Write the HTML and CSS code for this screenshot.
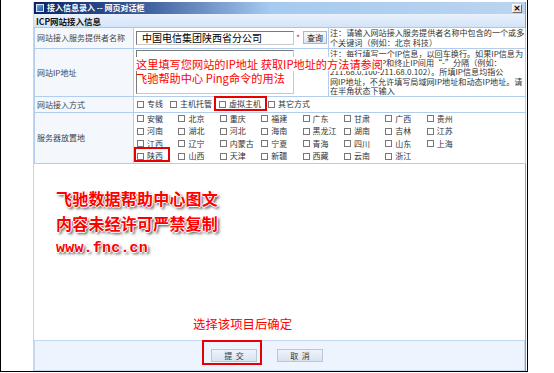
FILE: index.html
```html
<!DOCTYPE html>
<html lang="zh">
<head>
    <meta charset="UTF-8">
    <title>接入信息录入 -- 网页对话框</title>
    <link rel="stylesheet" href="styles.css">
</head>
<body>
    <div class="frame">
        <div class="dialog">
            <div class="titlebar">
                <span class="ticon"></span>
                <span class="ttext">接入信息录入 -- 网页对话框</span>
                <span class="close">×</span>
            </div>
            <div class="section-head">ICP网站接入信息</div>

            <table class="form">
                <tr class="r1">
                    <th>网站接入服务提供者名称</th>
                    <td class="field">
                        <div class="line">
                            <span class="input">中国电信集团陕西省分公司</span>
                            <span class="star">*</span>
                            <span class="btn-query">查询</span>
                        </div>
                    </td>
                    <td class="note">注：请输入网站接入服务提供者名称中包含的一个或多<br>个关键词（例如：北京 科技）</td>
                </tr>
                <tr class="r2">
                    <th>网站IP地址</th>
                    <td class="field"><div class="area"></div></td>
                    <td class="note">注：每行填写一个IP信息，以回车换行。如果IP信息为<br>段，请在起始IP和终止IP间用“-”分隔（例如：<br>211.68.0.100-211.68.0.102）。所填IP信息均指公<br>网IP地址，不允许填写局域网IP地址和动态IP地址。请<br>在半角状态下输入</td>
                </tr>
                <tr class="r3">
                    <th>网站接入方式</th>
                    <td colspan="2">
                        <div class="ways">
                            <span class="opt"><i class="box"></i>专线</span>
                            <span class="opt"><i class="box"></i>主机托管</span>
                            <span class="opt"><i class="box"></i>虚拟主机</span>
                            <span class="opt"><i class="box"></i>其它方式</span>
                        </div>
                    </td>
                </tr>
                <tr class="r4">
                    <th>服务器放置地</th>
                    <td colspan="2">
                        <div class="grid">
                            <span class="opt"><i class="box"></i>安徽</span>
                            <span class="opt"><i class="box"></i>北京</span>
                            <span class="opt"><i class="box"></i>重庆</span>
                            <span class="opt"><i class="box"></i>福建</span>
                            <span class="opt"><i class="box"></i>广东</span>
                            <span class="opt"><i class="box"></i>甘肃</span>
                            <span class="opt"><i class="box"></i>广西</span>
                            <span class="opt"><i class="box"></i>贵州</span>
                            <span class="opt"><i class="box"></i>河南</span>
                            <span class="opt"><i class="box"></i>湖北</span>
                            <span class="opt"><i class="box"></i>河北</span>
                            <span class="opt"><i class="box"></i>海南</span>
                            <span class="opt"><i class="box"></i>黑龙江</span>
                            <span class="opt"><i class="box"></i>湖南</span>
                            <span class="opt"><i class="box"></i>吉林</span>
                            <span class="opt"><i class="box"></i>江苏</span>
                            <span class="opt"><i class="box"></i>江西</span>
                            <span class="opt"><i class="box"></i>辽宁</span>
                            <span class="opt"><i class="box"></i>内蒙古</span>
                            <span class="opt"><i class="box"></i>宁夏</span>
                            <span class="opt"><i class="box"></i>青海</span>
                            <span class="opt"><i class="box"></i>四川</span>
                            <span class="opt"><i class="box"></i>山东</span>
                            <span class="opt"><i class="box"></i>上海</span>
                            <span class="opt"><i class="box"></i>陕西</span>
                            <span class="opt"><i class="box"></i>山西</span>
                            <span class="opt"><i class="box"></i>天津</span>
                            <span class="opt"><i class="box"></i>新疆</span>
                            <span class="opt"><i class="box"></i>西藏</span>
                            <span class="opt"><i class="box"></i>云南</span>
                            <span class="opt"><i class="box"></i>浙江</span>
                        </div>
                    </td>
                </tr>
            </table>

            <div class="body-space"></div>

            <div class="footer">
                <span class="btn">提&nbsp;&nbsp;交</span>
                <span class="btn">取&nbsp;&nbsp;消</span>
            </div>
        </div>

        <!-- 标注 -->
        <div class="ip-tip">
            <span class="tip-line tip-bg">这里填写您网站的IP地址 获取IP地址的方法请参阅</span>
            <span class="tip-line">飞驰帮助中心 Ping命令的用法</span>
        </div>
        <div class="mark mark-host"></div>
        <div class="mark mark-sx"></div>
        <div class="mark mark-submit"></div>
        <div class="watermark">
            <div>飞驰数据帮助中心图文</div>
            <div>内容未经许可严禁复制</div>
            <div class="wm-url">www.fnc.cn</div>
        </div>
        <div class="hint">选择该项目后确定</div>
    </div>
</body>
</html>
```

FILE: styles.css
```css
* {
    margin: 0;
    padding: 0;
    box-sizing: border-box;
}

html, body {
    width: 100%;
    height: 100%;
    overflow: hidden;
    background: #fff;
}

body {
    font-family: "Noto Sans CJK SC", "Liberation Sans", sans-serif;
    color: #333;
}

.frame {
    position: relative;
    width: 528px;
    height: 372px;
    padding: 2px 0 0 32px;
    border-left: 1px solid #000;
    border-right: 1px solid #000;
    border-bottom: 1px solid #000;
}

.dialog {
    width: 493px;
    height: 369px;
    display: flex;
    flex-direction: column;
    border-left: 1px solid #d6d3cc;
    border-right: 1px solid #9a9a9a;
}

/* 标题栏 */
.titlebar {
    height: 12px;
    display: flex;
    align-items: center;
    padding: 0 2px;
    background: linear-gradient(to right, #0a246a 0%, #3a5d9c 22%, #a6caf0 48%, #bcd4ef 100%);
}

.ticon {
    width: 8px;
    height: 8px;
    margin-right: 3px;
    background: linear-gradient(135deg, #6fa8e8, #1f4f9a);
    border: 1px solid #dfe9f6;
}

.ttext {
    flex: 1;
    color: #fff;
    font-size: 8px;
    font-weight: bold;
    line-height: 12px;
}

.close {
    width: 10px;
    height: 9px;
    margin-right: 1px;
    background: #e9e7e2;
    border: 1px solid #6b6b6b;
    border-top-color: #fff;
    border-left-color: #fff;
    font-size: 9px;
    line-height: 7px;
    text-align: center;
    color: #000;
    font-family: "DejaVu Sans", sans-serif;
    font-weight: bold;
}

.section-head {
    height: 14px;
    padding-left: 2px;
    font-size: 8.5px;
    font-weight: bold;
    line-height: 14px;
    color: #111;
    background: linear-gradient(to bottom, #e8f1fc, #d4e4f8);
    border-bottom: 1px solid #a9c6ec;
}

/* 表单 */
.form {
    width: 492px;
    border-collapse: collapse;
    table-layout: fixed;
    font-size: 8px;
}

.form th, .form td {
    border: 1px solid #b3cdee;
    border-top: none;
    vertical-align: middle;
    text-align: left;
    font-weight: normal;
}

.form th {
    width: 99px;
    padding-left: 2px;
    background: #f4f8fd;
    color: #444;
    font-size: 8px;
    white-space: nowrap;
}

.form td.field {
    width: 195px;
    padding-left: 2px;
}

.form td.note {
    padding: 0 1px;
    font-size: 8.1px;
    line-height: 9.4px;
    white-space: nowrap;
    color: #333;
    overflow: hidden;
}

.r1 { height: 20px; }
.r2 { height: 48px; }
.r3 { height: 16px; }
.r4 { height: 49px; }

.line {
    display: flex;
    align-items: center;
    white-space: nowrap;
}

.input {
    flex-shrink: 0;
    width: 158px;
    height: 14px;
    padding-left: 5px;
    font-size: 10px;
    line-height: 12px;
    color: #000;
    border: 1px solid #c9c9c9;
    border-top-color: #7a7a7a;
    border-left-color: #7a7a7a;
}

.star {
    flex-shrink: 0;
    width: 8px;
    color: #e00;
    font-size: 8px;
    text-align: center;
}

.btn-query {
    flex-shrink: 0;
    width: 24px;
    margin-left: 1px;
    height: 13px;
    font-size: 8px;
    line-height: 11px;
    text-align: center;
    color: #222;
    background: linear-gradient(to bottom, #f6f9fd, #dbe6f3);
    border: 1px solid #a8b8cc;
}

.area {
    width: 158px;
    height: 44px;
    border: 1px solid #c9c9c9;
    border-top-color: #7a7a7a;
    border-left-color: #7a7a7a;
}

.opt {
    display: flex;
    align-items: center;
    font-size: 8px;
    line-height: 12.5px;
    color: #333;
    white-space: nowrap;
}

.box {
    width: 7px;
    height: 7px;
    margin-right: 3px;
    border: 1px solid #777;
    background: #fff;
}

.ways {
    display: flex;
    gap: 7px;
    padding-left: 3px;
}

.grid {
    display: grid;
    grid-template-columns: repeat(8, 41.4px);
    padding-left: 3px;
}

.body-space {
    flex: 1;
}

/* 底部按钮 */
.footer {
    height: 31px;
    display: flex;
    align-items: center;
    gap: 20px;
    padding-left: 176px;
    background: #eef4fd;
    border: 1px solid #c5d8f1;
}

.btn {
    width: 46px;
    height: 13px;
    font-size: 8px;
    line-height: 11px;
    text-align: center;
    color: #333;
    background: linear-gradient(to bottom, #eef3fa, #d8e3f1);
    border: 1px solid #b8c6d8;
}

/* 红色标注 */
.ip-tip {
    position: absolute;
    left: 135px;
    top: 57px;
    display: flex;
    flex-direction: column;
    align-items: flex-start;
    font-size: 11.2px;
    line-height: 14px;
    color: #f00;
    white-space: nowrap;
}

.tip-bg {
    background: #fff;
}

.mark {
    position: absolute;
    border: 2px solid #e80000;
}

.mark-host {
    left: 213px;
    top: 96px;
    width: 53px;
    height: 15px;
}

.mark-sx {
    left: 133px;
    top: 147px;
    width: 36px;
    height: 15px;
}

.mark-submit {
    left: 201px;
    top: 340px;
    width: 60px;
    height: 25px;
}

.watermark {
    position: absolute;
    left: 55px;
    top: 186px;
    color: #f00;
    font-size: 16px;
    font-weight: bold;
    line-height: 25px;
    letter-spacing: 0.2px;
    text-shadow: -1px 0 #fff, 1px 0 #fff, 0 -1px #fff, 0 1px #fff, 2px 2px 3px #333;
}

.wm-url {
    font-family: "Liberation Mono", monospace;
    font-size: 15px;
}

.hint {
    position: absolute;
    left: 192px;
    top: 315px;
    font-size: 12.4px;
    color: #f00;
}
```
